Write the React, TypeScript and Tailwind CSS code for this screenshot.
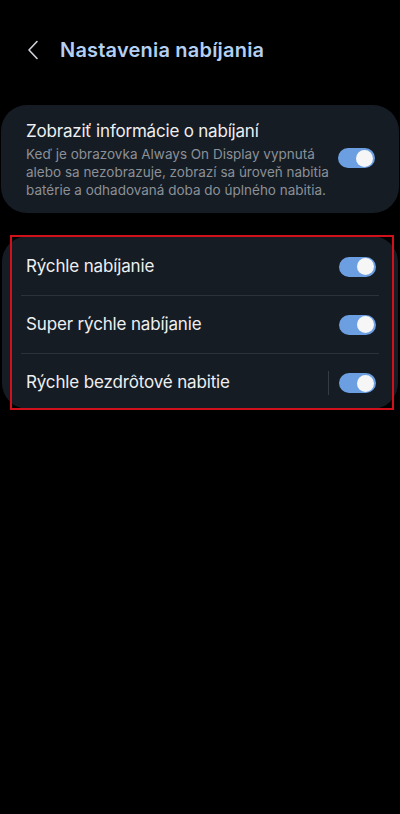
import { useState } from "react";

const font = { fontFamily: "Inter, 'Noto Sans', 'Liberation Sans', sans-serif" };

function Toggle({ on, onClick }: { on: boolean; onClick: () => void }) {
    return (
        <button
            onClick={onClick}
            className={`relative w-[37px] h-[20px] rounded-full shrink-0 ${on ? "bg-[#6b9fe2]" : "bg-[#4a4f57]"}`}
        >
            <span
                className={`absolute top-[1.5px] w-[17px] h-[17px] rounded-full bg-[#f6f6f6] ${on ? "right-[2px]" : "left-[2px]"}`}
            ></span>
        </button>
    );
}

function Row({ label, on, onClick, sep, last }: { label: string; on: boolean; onClick: () => void; sep?: boolean; last?: boolean }) {
    return (
        <div className={`flex items-center h-[58px] mx-[19px] pl-[5px] pr-[3px] ${last ? "" : "border-b border-[#2c323a]"}`}>
            <div className="flex-1 text-[17px] tracking-[-0.15px] text-[#eeeff1]">{label}</div>
            {sep && <div className="w-px h-[24px] bg-[#353b43] mr-[10px]"></div>}
            <Toggle on={on} onClick={onClick} />
        </div>
    );
}

function App() {
    const [info, setInfo] = useState(true);
    const [toggles, setToggles] = useState([true, true, true]);

    const flip = (i: number) => setToggles(toggles.map((t, j) => (j === i ? !t : t)));

    return (
        <div className="min-h-[814px] bg-black" style={font}>
            <div className="flex items-center h-[50px] pt-[25px] pl-[27px] box-content">
                <svg width="12" height="20" viewBox="0 0 12 20">
                    <path d="M10 1.5 L2 10 L10 18.5" fill="none" stroke="#d0d4da" strokeWidth="1.6" strokeLinecap="round" strokeLinejoin="round" />
                </svg>
                <h1 className="ml-[21px] text-[20px] font-semibold text-[#b3cff3] tracking-[0.2px]">Nastavenia nabíjania</h1>
            </div>

            <div className="mt-[30px] mx-[1px] rounded-[26px] bg-[#161c24] flex items-center pl-[25px] pr-[24px] pt-[14px] pb-[14px]">
                <div className="flex-1">
                    <div className="text-[17px] leading-[24px] tracking-[-0.2px] text-[#eeeff1]">Zobraziť informácie o nabíjaní</div>
                    <div className="text-[13.5px] leading-[18px] text-[#8b9097] mt-[2px]">
                        Keď je obrazovka Always On Display vypnutá<br />
                        alebo sa nezobrazuje, zobrazí sa úroveň nabitia<br />
                        batérie a odhadovaná doba do úplného nabitia.
                    </div>
                </div>
                <div className="mt-[4px]">
                    <Toggle on={info} onClick={() => setInfo(!info)} />
                </div>
            </div>

            <div className="relative mt-[23px] mx-[2px] rounded-[26px] bg-[#161c24] h-[173px] pt-[2px]">
                <Row label="Rýchle nabíjanie" on={toggles[0]} onClick={() => flip(0)} />
                <Row label="Super rýchle nabíjanie" on={toggles[1]} onClick={() => flip(1)} />
                <Row label="Rýchle bezdrôtové nabitie" on={toggles[2]} onClick={() => flip(2)} sep last />
                <div className="absolute left-[8px] top-[-1px] w-[384px] h-[175px] border-2 border-[#d0111b] pointer-events-none"></div>
            </div>
        </div>
    );
}

export default App;
